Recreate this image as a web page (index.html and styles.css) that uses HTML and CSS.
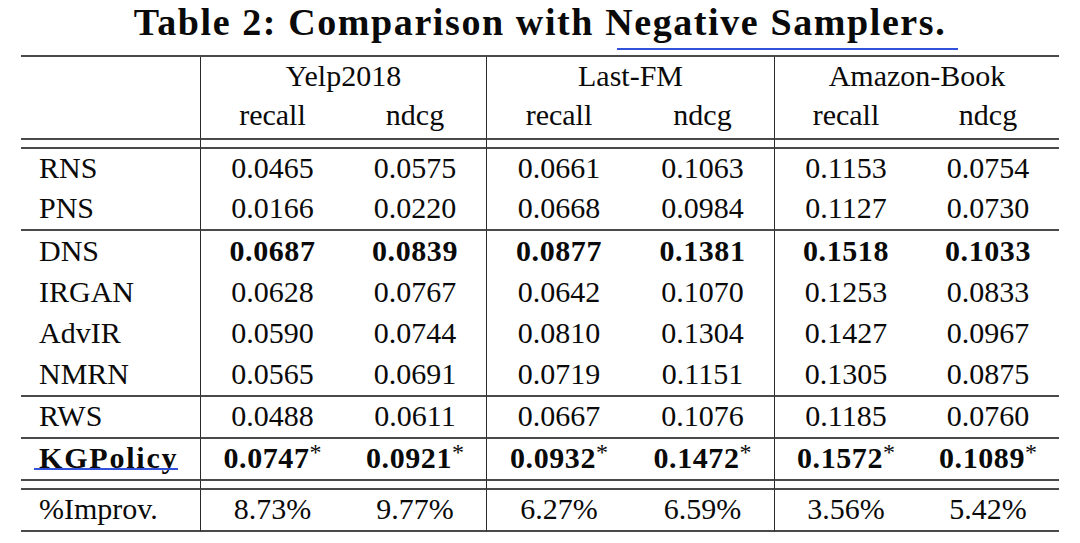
FILE: index.html
```html
<!DOCTYPE html>
<html>
<head>
<meta charset="utf-8">
<link rel="stylesheet" href="styles.css">
</head>
<body>
<h1 class="title">Table 2: Comparison with <span class="link">Negative Samplers.</span></h1>
<table class="results">
  <colgroup>
    <col class="c-label">
    <col class="c-a"><col class="c-a">
    <col class="c-b"><col class="c-b">
    <col class="c-c"><col class="c-c">
  </colgroup>
  <thead>
    <tr class="h1row">
      <th class="label"></th>
      <th colspan="2" class="gend">Yelp2018</th>
      <th colspan="2" class="gend">Last-FM</th>
      <th colspan="2">Amazon-Book</th>
    </tr>
    <tr class="h2row rule">
      <th class="label"></th>
      <th>recall</th><th class="gend">ndcg</th>
      <th>recall</th><th class="gend">ndcg</th>
      <th>recall</th><th>ndcg</th>
    </tr>
    <tr class="spacer rule">
      <td class="label"></td><td></td><td class="gend"></td><td></td><td class="gend"></td><td></td><td></td>
    </tr>
  </thead>
  <tbody>
    <tr><td class="label">RNS</td><td>0.0465</td><td class="gend">0.0575</td><td>0.0661</td><td class="gend">0.1063</td><td>0.1153</td><td>0.0754</td></tr>
    <tr class="rule"><td class="label">PNS</td><td>0.0166</td><td class="gend">0.0220</td><td>0.0668</td><td class="gend">0.0984</td><td>0.1127</td><td>0.0730</td></tr>
    <tr class="tall bold"><td class="label">DNS</td><td>0.0687</td><td class="gend">0.0839</td><td>0.0877</td><td class="gend">0.1381</td><td>0.1518</td><td>0.1033</td></tr>
    <tr class="tall"><td class="label">IRGAN</td><td>0.0628</td><td class="gend">0.0767</td><td>0.0642</td><td class="gend">0.1070</td><td>0.1253</td><td>0.0833</td></tr>
    <tr class="tall"><td class="label">AdvIR</td><td>0.0590</td><td class="gend">0.0744</td><td>0.0810</td><td class="gend">0.1304</td><td>0.1427</td><td>0.0967</td></tr>
    <tr class="tall rule"><td class="label">NMRN</td><td>0.0565</td><td class="gend">0.0691</td><td>0.0719</td><td class="gend">0.1151</td><td>0.1305</td><td>0.0875</td></tr>
    <tr class="rule"><td class="label">RWS</td><td>0.0488</td><td class="gend">0.0611</td><td>0.0667</td><td class="gend">0.1076</td><td>0.1185</td><td>0.0760</td></tr>
    <tr class="rule bold"><td class="label"><span class="kg">KGPolicy</span></td><td>0.0747<sup>*</sup></td><td class="gend">0.0921<sup>*</sup></td><td>0.0932<sup>*</sup></td><td class="gend">0.1472<sup>*</sup></td><td>0.1572<sup>*</sup></td><td>0.1089<sup>*</sup></td></tr>
    <tr class="spacer rule">
      <td class="label"></td><td></td><td class="gend"></td><td></td><td class="gend"></td><td></td><td></td>
    </tr>
    <tr class="rule"><td class="label">%Improv.</td><td>8.73%</td><td class="gend">9.77%</td><td>6.27%</td><td class="gend">6.59%</td><td>3.56%</td><td>5.42%</td></tr>
  </tbody>
</table>
</body>
</html>
```
FILE: styles.css
```css
html, body {
  margin: 0;
  padding: 0;
  background: #ffffff;
}

body {
  font-family: "Liberation Serif", "Times New Roman", serif;
  color: #0a0a0a;
}

.title {
  margin: 0 0 11px 0;
  font-size: 38px;
  line-height: 44px;
  letter-spacing: 1.6px;
  font-weight: bold;
  text-align: center;
  color: #0a0a0a;
}

.link {
  position: relative;
}

.link::after {
  content: "";
  position: absolute;
  left: 12px;
  right: -12px;
  bottom: -7px;
  height: 2px;
  background: #3150dc;
}

.results {
  margin-left: 21px;
  width: 1037px;
  table-layout: fixed;
  border-collapse: separate;
  border-spacing: 0;
  border-top: 2px solid #4a4a4a;
  font-size: 30px;
}

.c-label { width: 180px; }
.c-a { width: 143px; }
.c-b { width: 144px; }
.c-c { width: 142px; }

.results th,
.results td {
  padding: 0 0 2px 0;
  height: 40px;
  line-height: 38px;
  text-align: center;
  font-weight: normal;
  white-space: nowrap;
  box-sizing: border-box;
}

.results .label {
  text-align: left;
  padding-left: 18px;
  border-right: 1px solid #2a2a2a;
}

.results .gend {
  border-right: 1px solid #2a2a2a;
}

.results .h2row th {
  height: 43px;
  line-height: 36px;
  padding-bottom: 5px;
}

.results tr.rule > th,
.results tr.rule > td {
  border-bottom: 2px solid #4a4a4a;
}

.results tr.rule > th,
.results tr.rule > td {
  height: 42px;
}

.results tr.spacer > td {
  height: 9px;
  line-height: 7px;
  padding: 0;
}

.results tr.tall > td {
  height: 41px;
  line-height: 39px;
}

.results tr.tall.rule > td {
  height: 43px;
}

.results tr.bold > td {
  font-weight: bold;
  letter-spacing: 0.6px;
}

.results tr.bold > td.label {
  font-weight: normal;
  letter-spacing: 0;
}

.results .kg {
  position: relative;
  font-weight: bold;
  letter-spacing: 1.8px;
}

.results .kg::after {
  content: "";
  position: absolute;
  left: -5px;
  right: 0;
  bottom: 4px;
  height: 2px;
  background: #3150dc;
}

.results sup {
  font-size: 24px;
  font-weight: normal;
  line-height: 0;
  vertical-align: 8px;
  margin-left: 0;
  letter-spacing: 0;
}
```
